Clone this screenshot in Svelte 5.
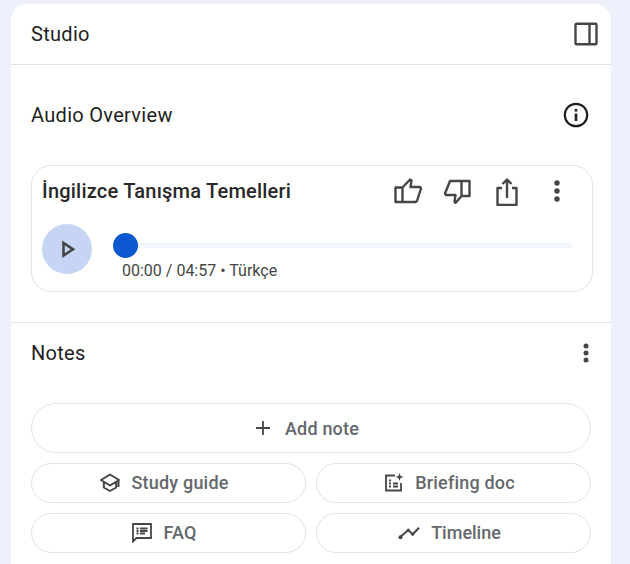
<script>
  let title = "İngilizce Tanışma Temelleri";
  let time = "00:00 / 04:57 • Türkçe";
</script>

<div class="page">
  <div class="panel">
    <header class="head">
      <span class="heading">Studio</span>
      <svg width="24" height="24" viewBox="0 0 24 24" fill="none" stroke="#444746" stroke-width="2.400">
        <path d="M2.500 1.700h19a1 1 0 0 1 1 1v18.600a1 1 0 0 1-1 1h-19a1 1 0 0 1-1-1V2.700a1 1 0 0 1 1-1zM15.500 1.700v20.600"/>
      </svg>
    </header>

    <section class="audio">
      <div class="row">
        <span class="heading">Audio Overview</span>
        <svg width="26" height="26" viewBox="0 0 26 26">
          <circle cx="13" cy="13" r="11.200" fill="none" stroke="#1f1f1f" stroke-width="2.200"/>
          <rect x="11.700" y="11.500" width="2.600" height="7.500" fill="#1f1f1f"/>
          <rect x="11.700" y="7" width="2.600" height="2.600" fill="#1f1f1f"/>
        </svg>
      </div>

      <div class="card">
        <div class="card-top">
          <span class="title">{title}</span>
          <div class="actions">
            <svg width="30" height="30" viewBox="0 0 30 30" fill="none" stroke="#444746" stroke-width="2.400" stroke-linejoin="round">
              <path d="M2.500 11.500h7V26h-7zM9.500 11.500L17 3.500l1.500 1-1 6.500h9.500l1 1.500-4 12.500-1.500 1H9.500"/>
            </svg>
            <svg width="30" height="30" viewBox="0 0 30 30" fill="none" stroke="#444746" stroke-width="2.400" stroke-linejoin="round">
              <path d="M19.500 5h8v15h-8zM19.500 5H8L3 17.500 4 19h9.500l-1 7 1 1 6-7"/>
            </svg>
            <svg class="share" width="30" height="30" viewBox="0 0 30 30" fill="none" stroke="#444746" stroke-width="2.400" stroke-linejoin="round">
              <path d="M10 12H5.500v17h19V12H20M15 22V4M10.500 8L15 3.500 19.500 8"/>
            </svg>
            <svg class="more" width="24" height="24" viewBox="0 0 24 24" fill="#444746">
              <circle cx="12" cy="4" r="2.700"/><circle cx="12" cy="12" r="2.700"/><circle cx="12" cy="20" r="2.700"/>
            </svg>
          </div>
        </div>
        <div class="player">
          <div class="play">
            <svg width="18" height="18" viewBox="0 0 18 18" fill="none" stroke="#444746" stroke-width="2.600">
              <path d="M5.500 3v12.500l9.500-6.200z"/>
            </svg>
          </div>
          <div class="progress">
            <div class="track"><span class="knob"></span></div>
            <div class="time">{time}</div>
          </div>
        </div>
      </div>
    </section>

    <section class="notes">
      <div class="row">
        <span class="heading">Notes</span>
        <svg class="notes-more" width="24" height="24" viewBox="0 0 24 24" fill="#444746">
          <circle cx="12" cy="5" r="2.500"/><circle cx="12" cy="12" r="2.500"/><circle cx="12" cy="19" r="2.500"/>
        </svg>
      </div>

      <button class="add">
        <svg width="16" height="16" viewBox="0 0 16 16" stroke="#444746" stroke-width="1.800"><path d="M8 1v14M1 8h14"/></svg>
        Add note
      </button>

      <div class="grid">
        <button>
          <svg width="20" height="20" viewBox="0 0 20 20" fill="none" stroke="#444746" stroke-width="2" stroke-linejoin="round">
            <path d="M10 1.500L1 7l9 5.500L19 7zM3.800 9.500v5L10 18l6.200-3.500v-5M18.500 7v7"/>
          </svg>
          Study guide
        </button>
        <button>
          <svg width="20" height="20" viewBox="0 0 20 20" fill="none" stroke="#444746" stroke-width="1.800">
            <path d="M11 2.500H2v15h15V10"/>
            <path d="M5 7.500h2M5 10.500h2M5 13.500h2M9 10.500h5M9 13.500h5"/>
            <path d="M15.500 0l1.100 2.900 2.900 1.100-2.900 1.100-1.100 2.900-1.100-2.900-2.900-1.100 2.900-1.100z" fill="#444746" stroke="none"/>
          </svg>
          Briefing doc
        </button>
        <button>
          <svg width="20" height="20" viewBox="0 0 20 20" fill="none" stroke="#444746" stroke-width="1.800">
            <path d="M1 1h18v14H4.500L1 18.500z"/>
            <path d="M4.500 5.500h2M4.500 8h2M4.500 10.500h2M8 5.500h7.500M8 8h7.500M8 10.500h5"/>
          </svg>
          FAQ
        </button>
        <button class="tight">
          <svg width="22" height="20" viewBox="0 0 22 20" fill="none" stroke="#444746" stroke-width="2">
            <path d="M2 14.300L10.300 7l4.400 4.300L21 4.700"/>
            <circle cx="2.500" cy="14.300" r="2" fill="#444746" stroke="none"/>
            <circle cx="10.300" cy="7" r="1.500" fill="#444746" stroke="none"/>
            <circle cx="14.700" cy="11.300" r="1.500" fill="#444746" stroke="none"/>
          </svg>
          Timeline
        </button>
      </div>
    </section>
  </div>
</div>

<style>
  :global(body) {
    background: #edeffa;
    overflow: hidden;
  }

  * {
    box-sizing: border-box;
  }

  .page {
    padding: 4px 19px 0 11px;
    height: 564px;
    font-family: Roboto, "Liberation Sans", sans-serif;
    color: #1f1f1f;
  }

  .panel {
    background: #fff;
    border-radius: 16px 16px 0 0;
    height: 560px;
    overflow: hidden;
  }

  .head {
    display: flex;
    align-items: center;
    justify-content: space-between;
    height: 61px;
    padding: 0 13px 0 20px;
    border-bottom: 1px solid #dde1ee;
  }

  .heading {
    font-size: 20px;
    line-height: 28px;
    letter-spacing: 0.3px;
  }

  .row {
    display: flex;
    align-items: center;
    justify-content: space-between;
  }

  .audio {
    height: 258px;
    padding: 36px 18px 0 20px;
    border-bottom: 1px solid #e1e3f0;
  }

  .audio .row {
    padding-right: 4px;
  }

  .card {
    margin-top: 36px;
    height: 127px;
    border: 1px solid #e1e3f0;
    border-radius: 20px;
    padding: 0 10px;
  }

  .card-top {
    display: flex;
    align-items: center;
    justify-content: space-between;
    height: 50px;
  }

  .title {
    font-size: 20px;
    font-weight: 500;
    letter-spacing: 0.22px;
    color: #282828;
  }

  .actions {
    display: flex;
    align-items: center;
    gap: 19px;
    padding-right: 13px;
  }

  .share {
    margin-left: 1px;
  }

  .more {
    margin-left: 4px;
  }

  .player {
    display: flex;
    gap: 21px;
    margin-top: 8px;
  }

  .play {
    width: 50px;
    height: 50px;
    border-radius: 50%;
    background: #c5d5f3;
    display: flex;
    align-items: center;
    justify-content: center;
  }

  .progress {
    flex: 1;
    padding-top: 9px;
  }

  .track {
    height: 5px;
    margin-top: 10px;
    margin-right: 9px;
    border-radius: 3px;
    background: #f2f5fc;
    position: relative;
  }

  .knob {
    position: absolute;
    left: 0;
    top: -10px;
    width: 25px;
    height: 25px;
    border-radius: 50%;
    background: #0b57d0;
  }

  .time {
    font-size: 16px;
    line-height: 20px;
    margin-top: 13px;
    padding-left: 9px;
    color: #444746;
  }

  .notes {
    padding: 16px 20px 0;
  }

  .notes-more {
    margin-right: -7px;
  }

  .grid {
    display: grid;
    grid-template-columns: 1fr 1fr;
    gap: 10px;
    margin-top: 10px;
  }

  button {
    height: 40px;
    width: 100%;
    padding: 0 8px 1px 0;
    border: 1px solid #e1e3f0;
    border-radius: 20px;
    background: #fff;
    display: flex;
    align-items: center;
    justify-content: center;
    gap: 11px;
    font: 500 18px Roboto, "Liberation Sans", sans-serif;
    letter-spacing: 0.2px;
    color: #65686c;
  }

  .tight {
    letter-spacing: 0;
  }

  .add {
    height: 50px;
    border-radius: 25px;
    margin-top: 36px;
    padding-bottom: 0;
    gap: 14px;
  }
</style>
